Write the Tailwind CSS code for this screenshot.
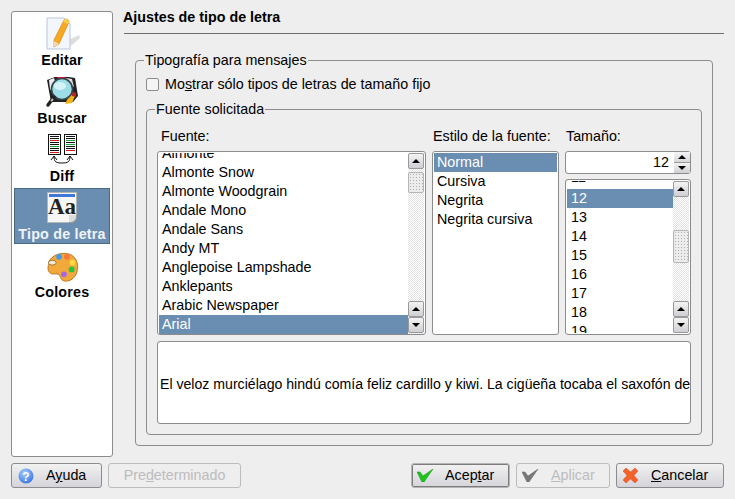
<!DOCTYPE html>
<html lang="es">
<head>
<meta charset="UTF-8" />
<title>Ajustes de tipo de letra</title>
<script src="https://cdn.jsdelivr.net/npm/@tailwindcss/browser@4"></script>
</head>
<body class="bg-[#eeeeee] w-[735px] h-[499px] overflow-hidden font-['Liberation_Sans',sans-serif] text-[14.3px] leading-[19px] text-black">
<div class="flex h-[457px] pl-[11px] pr-[11px]">

  <!-- sidebar -->
  <div class="w-[102px] h-[446px] mt-[11px] shrink-0 bg-white border border-[#8c8c8c] rounded-[3px] p-[2px] font-bold tracking-[0.2px]">
    <div class="h-[58px] flex flex-col items-center justify-end pb-[2px]">
      <svg width="36" height="34" viewBox="0 0 36 34" class="mb-[1px]">
        <path d="M24 24l11-5 1 3-9 8z" fill="#dedede"/>
        <path d="M3 2h17l6 6v25H3z" fill="#f3f6fc" stroke="#b8c6de"/>
        <path d="M10 24L20 4c1-2 5-1 5 2L15 28l-5 3z" fill="#f7a823" stroke="#d98b10" stroke-width=".7"/>
        <path d="M20 4c1-2 5-1 5 2l-1 2-5-2z" fill="#f5d04e"/>
        <path d="M10 25l5 3-5 3z" fill="#f0d9b5"/>
      </svg>
      <span>Editar</span>
    </div>
    <div class="h-[58px] flex flex-col items-center justify-end pb-[2px]">
      <svg width="34" height="33" viewBox="0 0 34 33" class="mb-[1px]">
        <path d="M2 5l8-3h14l6 1 3 18-5 6H6z" fill="#222"/>
        <path d="M4 5l5-2 2 6-4 8-2-3z" fill="#f0eeee"/>
        <path d="M12 2h8l3 5H14z" fill="#e0103a"/>
        <path d="M21 3l6 1 2 8-5-3z" fill="#e8e0e0"/>
        <path d="M26 18l4 3-3 7-7 1 3-6z" fill="#f2b415"/>
        <path d="M26 16l5 2v4l-4-1z" fill="#c4201a"/>
        <circle cx="17" cy="14" r="10.500" fill="#9fdde6" stroke="#33464c" stroke-width="1.600"/>
        <ellipse cx="15" cy="11" rx="6" ry="4" fill="#d4f3f7"/>
        <path d="M9 22l-6 8" stroke="#222" stroke-width="3.500" stroke-linecap="round"/>
        <path d="M8 24l-2 2" stroke="#bbb" stroke-width="2"/>
      </svg>
      <span>Buscar</span>
    </div>
    <div class="h-[58px] flex flex-col items-center justify-end pb-[2px]">
      <svg width="32" height="31" viewBox="0 0 32 31" class="mb-[2px]">
        <rect x="2.500" y=".5" width="12" height="20" fill="#fff" stroke="#111"/>
        <rect x="18.500" y=".5" width="12" height="20" fill="#fff" stroke="#111"/>
        <path d="M4 2.500h9M4 4.500h9M4 8.500h9M4 10.500h9M4 14.500h9M4 16.500h9M20 2.500h9M20 4.500h9M20 8.500h9M20 12.500h9M20 14.500h9" stroke="#111"/>
        <path d="M4 6.500h9M4 18.500h9M20 16.500h9" stroke="#d01818"/>
        <path d="M4 12.500h9M20 6.500h9M20 10.500h9" stroke="#18a030"/>
        <path d="M8 22c0 6 2 7 8 7s8-1 8-7M5 26l3-4 3 4M21 26l3-4 3 4" fill="none" stroke="#111"/>
      </svg>
      <span>Diff</span>
    </div>
    <div class="h-[56px] flex flex-col items-center justify-end bg-[#6a8eb2] border border-[#4a6a88] text-[#f2f2f2]">
      <div class="relative w-[30px] h-[31px] mb-[2px] bg-[#f6f6f4] border border-[#b4b4b4] shrink-0">
        <div class="h-[3px] mx-[1px] mt-[1px] bg-[#3f78d8]"></div>
        <div class="font-['Liberation_Serif',serif] font-bold tracking-normal text-[23px] leading-[20px] text-[#222] text-center">Aa</div>
        <div class="absolute right-[-1px] bottom-[-1px] w-[8px] h-[8px] bg-[#6a8eb2]">
          <div class="w-full h-full bg-[#dcdcdc] rounded-br-[6px] border-r border-b border-[#999]"></div>
        </div>
      </div>
      <span class="text-white/90 -mb-[1px]">Tipo de letra</span>
    </div>
    <div class="h-[58px] flex flex-col items-center justify-end">
      <svg width="34" height="31" viewBox="0 0 34 32">
        <path d="M3 11C6 3 16 0 24 2c7 2 10 9 9 16-1 8-7 13-14 12-4-1-3-6-6-7-4-1-6 1-9-2-2-2-2-6 0-10z" fill="#f2a93c" stroke="#a8640f" stroke-width=".8"/>
        <ellipse cx="7" cy="11" rx="4" ry="2.500" fill="#f4e9d2" stroke="#8a5a1a" stroke-width=".8"/>
        <circle cx="14" cy="5" r="3" fill="#3d9bf0"/>
        <circle cx="22" cy="5" r="3" fill="#f4793a"/>
        <circle cx="28" cy="11" r="3" fill="#ffd93a"/>
        <circle cx="27" cy="18" r="3" fill="#23c53a"/>
        <circle cx="19" cy="23" r="3" fill="#a66ae0"/>
      </svg>
      <span>Colores</span>
    </div>
  </div>

  <!-- main -->
  <div class="w-[600px] ml-[11px]">
    <div class="h-[34px] pt-[8px] font-bold -indent-[1px] border-b border-[#6e6e6e]">Ajustes de tipo de letra</div>

    <fieldset class="ml-[11px] mr-[11px] mt-[18px] h-[394px] border border-[#8c8c8c] rounded-[4px] px-[10px]">
      <legend class="-ml-[2px] px-[1px] leading-[17px]">Tipografía para mensajes</legend>
      <div class="flex items-center h-[19px] mt-[6px]">
        <span class="w-[13px] h-[13px] border border-[#8c8c8c] rounded-[2px] bg-[#f4f4f4]"></span>
        <span class="ml-[6px]">Mo<u>s</u>trar sólo tipos de letras de tamaño fijo</span>
      </div>

      <fieldset class="mt-[7px] h-[334px] border border-[#8c8c8c] rounded-[4px] px-[10px]">
        <legend class="-ml-[2px] px-[1px] leading-[17px]">Fuente solicitada</legend>

        <div class="flex mt-[9px] h-[19px]">
          <span class="w-[275px] pl-[4px]">Fuente:</span>
          <span class="w-[133px] pl-[1px]">Estilo de la fuente:</span>
          <span class="pl-[1px]">Tamaño:</span>
        </div>

        <div class="flex gap-[6px] mt-[5px] h-[184px]">
          <!-- font list -->
          <div class="w-[269px] flex bg-white border border-[#8c8c8c] rounded-[3px] pt-[1px] px-[1px] overflow-hidden">
            <div class="flex-1 flex flex-col justify-end overflow-hidden">
              <div class="h-[19px] shrink-0 px-[3px]">Almonte</div>
              <div class="h-[19px] shrink-0 px-[3px]">Almonte Snow</div>
              <div class="h-[19px] shrink-0 px-[3px]">Almonte Woodgrain</div>
              <div class="h-[19px] shrink-0 px-[3px]">Andale Mono</div>
              <div class="h-[19px] shrink-0 px-[3px]">Andale Sans</div>
              <div class="h-[19px] shrink-0 px-[3px]">Andy MT</div>
              <div class="h-[19px] shrink-0 px-[3px]">Anglepoise Lampshade</div>
              <div class="h-[19px] shrink-0 px-[3px]">Anklepants</div>
              <div class="h-[19px] shrink-0 px-[3px]">Arabic Newspaper</div>
              <div class="h-[19px] shrink-0 px-[3px] bg-[#6a8eb2] text-white">Arial</div>
            </div>
            <div class="w-[16px] flex flex-col pb-[1px] bg-[repeating-conic-gradient(#e2e2e2_0_25%,#ffffff_0_50%)] bg-[length:2px_2px]">
              <div class="h-[16px] flex items-center justify-center border border-[#9a9a9a] rounded-[2px] bg-gradient-to-b from-[#f4f4f4] to-[#cfcfd4]"><span class="w-0 h-0 border-x-[4px] border-x-transparent border-b-[4px] border-b-black"></span></div>
              <div class="h-[21px] mt-[3px] border border-[#b4b4b4] rounded-[2px] bg-[#ececec] bg-[radial-gradient(#b0b0b0_0.7px,transparent_0.8px)] bg-[length:3px_3px]"></div>
              <div class="h-[16px] mt-auto flex items-center justify-center border border-[#9a9a9a] rounded-[2px] bg-gradient-to-b from-[#f4f4f4] to-[#cfcfd4]"><span class="w-0 h-0 border-x-[4px] border-x-transparent border-b-[4px] border-b-black"></span></div>
              <div class="h-[16px] flex items-center justify-center border border-[#9a9a9a] rounded-[2px] bg-gradient-to-b from-[#f4f4f4] to-[#cfcfd4]"><span class="w-0 h-0 border-x-[4px] border-x-transparent border-t-[4px] border-t-black"></span></div>
            </div>
          </div>

          <!-- style list -->
          <div class="w-[127px] bg-white border border-[#8c8c8c] rounded-[3px] p-[1px]">
            <div class="h-[19px] px-[3px] bg-[#6a8eb2] text-white">Normal</div>
            <div class="h-[19px] px-[3px]">Cursiva</div>
            <div class="h-[19px] px-[3px]">Negrita</div>
            <div class="h-[19px] px-[3px]">Negrita cursiva</div>
          </div>

          <!-- size -->
          <div class="w-[126px] flex flex-col">
            <div class="h-[23px] flex bg-white border border-[#8c8c8c] rounded-[3px]">
              <div class="flex-1 text-right pr-[5px] pt-[1px]">12</div>
              <div class="w-[16px] flex flex-col">
                <div class="h-[11px] flex items-center justify-center border-b border-[#9a9a9a] bg-gradient-to-b from-[#f4f4f4] to-[#d8d8dc]"><span class="w-0 h-0 border-x-[4px] border-x-transparent border-b-[4px] border-b-black"></span></div>
                <div class="h-[10px] flex items-center justify-center bg-gradient-to-b from-[#f4f4f4] to-[#cfcfd4]"><span class="w-0 h-0 border-x-[4px] border-x-transparent border-t-[4px] border-t-black"></span></div>
              </div>
            </div>
            <div class="h-[156px] mt-[5px] flex bg-white border border-[#8c8c8c] rounded-[3px] p-[1px]">
              <div class="flex-1 overflow-hidden">
                <div class="h-[19px] px-[4px] mt-[-11px]"><span class="relative top-[-2px]">11</span></div>
                <div class="h-[19px] px-[4px] bg-[#6a8eb2] text-white">12</div>
                <div class="h-[19px] px-[4px]">13</div>
                <div class="h-[19px] px-[4px]">14</div>
                <div class="h-[19px] px-[4px]">15</div>
                <div class="h-[19px] px-[4px]">16</div>
                <div class="h-[19px] px-[4px]">17</div>
                <div class="h-[19px] px-[4px]">18</div>
                <div class="h-[19px] px-[4px]">19</div>
              </div>
              <div class="w-[16px] flex flex-col bg-[repeating-conic-gradient(#e2e2e2_0_25%,#ffffff_0_50%)] bg-[length:2px_2px]">
                <div class="h-[16px] flex items-center justify-center border border-[#9a9a9a] rounded-[2px] bg-gradient-to-b from-[#f4f4f4] to-[#cfcfd4]"><span class="w-0 h-0 border-x-[4px] border-x-transparent border-b-[4px] border-b-black"></span></div>
                <div class="h-[33px] mt-[33px] border border-[#b4b4b4] rounded-[2px] bg-[#ececec] bg-[radial-gradient(#b0b0b0_0.7px,transparent_0.8px)] bg-[length:3px_3px]"></div>
                <div class="h-[16px] mt-auto flex items-center justify-center border border-[#9a9a9a] rounded-[2px] bg-gradient-to-b from-[#f4f4f4] to-[#cfcfd4]"><span class="w-0 h-0 border-x-[4px] border-x-transparent border-b-[4px] border-b-black"></span></div>
                <div class="h-[16px] flex items-center justify-center border border-[#9a9a9a] rounded-[2px] bg-gradient-to-b from-[#f4f4f4] to-[#cfcfd4]"><span class="w-0 h-0 border-x-[4px] border-x-transparent border-t-[4px] border-t-black"></span></div>
              </div>
            </div>
          </div>
        </div>

        <!-- preview -->
        <div class="mt-[6px] h-[83px] w-[534px] flex items-center bg-white border border-[#8c8c8c] rounded-[3px] pl-[2px] pt-[3px] text-[14.12px] overflow-hidden whitespace-nowrap">El veloz murciélago hindú comía feliz cardillo y kiwi. La cigüeña tocaba el saxofón detrás del palenque de paja.</div>
      </fieldset>
    </fieldset>
  </div>
</div>

<!-- bottom buttons -->
<div class="flex pl-[11px] pr-[11px] pt-[6px] gap-[6px]">
  <div class="w-[91px] h-[25px] flex items-center pl-[6px] border border-[#8c8c8c] rounded-[3px] bg-gradient-to-b from-[#f2f2f2] to-[#d4d4da]">
    <svg width="16" height="16" viewBox="0 0 16 16"><defs><radialGradient id="helpBlue" cx=".4" cy=".3" r=".8"><stop offset="0" stop-color="#a8ccff"/><stop offset="1" stop-color="#2d6fe0"/></radialGradient></defs><circle cx="8" cy="8" r="7.500" fill="url(#helpBlue)"/><text x="8" y="12.500" text-anchor="middle" font-family="Liberation Sans" font-weight="700" font-size="12" fill="#fff">?</text></svg>
    <span class="ml-[12px]">A<u>y</u>uda</span>
  </div>
  <div class="w-[133px] h-[25px] flex items-center justify-center border border-[#bdbdbd] rounded-[3px] text-[#bcbcbc]">Pre<u>d</u>eterminado</div>
  <div class="ml-auto w-[99px] h-[25px] flex items-center pl-[5px] border border-[#b4b4b4] shadow-[inset_0_0_0_1px_#7c7c7c] rounded-[3px] bg-gradient-to-b from-[#f2f2f2] to-[#d4d4da]">
    <svg width="17" height="13" viewBox="0 0 17 13"><path d="M0 3l3 0 3 4L16 0 7 13H5z" fill="#1fc41f" stroke="#0b8a0b" stroke-width=".5"/></svg>
    <span class="ml-[11px]">Acep<u>t</u>ar</span>
  </div>
  <div class="w-[94px] h-[25px] flex items-center pl-[5px] border border-[#bdbdbd] rounded-[3px] text-[#bcbcbc]">
    <svg width="17" height="13" viewBox="0 0 17 13"><path d="M0 3l3 0 3 4L16 0 7 13H5z" fill="#777" stroke="#666" stroke-width=".5"/></svg>
    <span class="ml-[12px]"><u>A</u>plicar</span>
  </div>
  <div class="w-[108px] h-[25px] flex items-center pl-[6px] border border-[#8c8c8c] rounded-[3px] bg-gradient-to-b from-[#f2f2f2] to-[#d4d4da]">
    <svg width="15" height="15" viewBox="0 0 15 15"><path d="M0 3l3-3 4.500 4L12 0l3 3-4 4.500 4 4.500-3 3-4.500-4L3 15l-3-3 4-4.500z" fill="#f4622c" stroke="#e04a18" stroke-width=".5"/></svg>
    <span class="ml-[13px]"><u>C</u>ancelar</span>
  </div>
</div>
</body>
</html>
